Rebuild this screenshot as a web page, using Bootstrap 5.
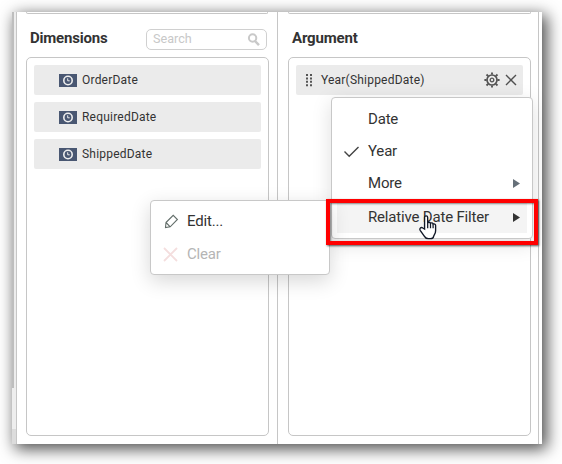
<!DOCTYPE html>
<html lang="en">
<head>
<meta charset="utf-8">
<meta name="viewport" content="width=device-width, initial-scale=1">
<title>Data bindings</title>
<link href="https://cdn.jsdelivr.net/npm/bootstrap@5.3.0/dist/css/bootstrap.min.css" rel="stylesheet">
<style>
body{width:562px;height:464px;overflow:hidden;background:#fff;font-family:Roboto,"Liberation Sans",sans-serif;color:#333;padding:12px 20px 20px 12px}
svg{display:block;flex:none}
.designer{width:530px;height:432px;background:#fff;box-shadow:4px 4px 15px 1px rgba(0,0,0,.7)}
.scroll-strip{width:4px;background:#dcdcdc}
.strip-thumb{height:376px;background:linear-gradient(90deg,#bebebe 2px,#ededed 2px)}
.strip-rest{height:41px;background:#eee}
.pane{width:261px;border-right:1px solid #c6c6c6;padding:0 7px 0 10px}
.pane-first{width:262px;border-left:1px solid #c6c6c6;padding:0 9px}
.prev-box{height:2px;border:1px solid #c6c6c6;border-top:0;border-radius:0 0 5px 5px}
.pane-head{height:43px;padding:14px 1px 0 4px}
.pane-title{font-size:15px;line-height:20px;font-weight:700;letter-spacing:-.16px}
.pane-first .pane-title{letter-spacing:-.2px}
.search-box{width:121px;height:21px;border:1px solid #d0d0d0;border-radius:5px;padding:0 5px 0 6px;font-size:12.600px;color:#c8c8c8;margin-top:1px}
.drop-box{height:379px;width:243px;border:1px solid #c6c6c6;border-radius:5px;padding:7px}
.chip{height:30px;width:227px;margin-bottom:7px;background:#ebebeb;border-radius:2px;font-size:12px;letter-spacing:.21px}
.chip-field{padding-left:25px;gap:5px}
.popup{position:absolute;background:#fff;border:1px solid #c8c8c8;border-radius:4px;font-size:15px;letter-spacing:-.18px}
.popup-main{left:331px;top:97px;width:202px;height:142px;padding:5px;box-shadow:0 5px 20px rgba(0,0,0,.13)}
.popup-sub{left:150px;top:200px;width:180px;height:75px;padding:4px 12px;box-shadow:0 6px 20px rgba(0,0,0,.16)}
.entry{height:32px;padding-left:6px;padding-right:7px}
.entry-hot{height:30px;background:#f4f4f4;margin-top:4px;padding-bottom:2px}
.entry-check{width:25px}
.sub-entry{height:33px}
.disabled-text{color:#b5b5b5}
.marker{position:absolute;left:326px;top:199px;width:212px;height:46px;border:4px solid #f00;box-shadow:1px 1px 2px rgba(0,0,0,.65),inset 1px 1px 2px rgba(0,0,0,.45)}
.pointer{position:absolute;left:418px;top:215px}
</style>
</head>
<body class="position-relative">
<svg width="0" height="0" class="position-absolute"><symbol id="clock" viewBox="0 0 18 13"><path fill="#495772" d="M0 0h18v13H0z"/><circle cx="9" cy="6.5" r="4.2" fill="none" stroke="#eee" stroke-width="1.6"/><path d="M8.7 4.3v2.5h2" fill="none" stroke="#eee"/></symbol></svg>
<main class="designer d-flex">
  <div class="scroll-strip"><div class="strip-thumb"></div><div class="strip-rest"></div></div>
  <section class="pane pane-first">
    <div class="prev-box"></div>
    <div class="pane-head d-flex justify-content-between align-items-start">
      <div class="pane-title">Dimensions</div>
      <div class="search-box d-flex align-items-center justify-content-between"><span>Search</span>
        <svg width="14" height="14" viewBox="0 0 14 14"><circle cx="5.6" cy="5" r="3.7" fill="none" stroke="#c9c9c9" stroke-width="2"/><path d="m8 8 4 4.2" stroke="#c9c9c9" stroke-width="2.5"/></svg></div>
    </div>
    <div class="drop-box">
      <div class="chip chip-field d-flex align-items-center"><svg width="18" height="13"><use href="#clock"/></svg><span>OrderDate</span></div>
      <div class="chip chip-field d-flex align-items-center"><svg width="18" height="13"><use href="#clock"/></svg><span>RequiredDate</span></div>
      <div class="chip chip-field d-flex align-items-center"><svg width="18" height="13"><use href="#clock"/></svg><span>ShippedDate</span></div>
    </div>
  </section>
  <section class="pane">
    <div class="prev-box"></div>
    <div class="pane-head"><div class="pane-title">Argument</div></div>
    <div class="drop-box">
      <div class="chip d-flex align-items-center">
        <svg width="25" height="14" viewBox="0 0 25 14" fill="#555"><path d="M10 1h2v2h-2zM14 1h2v2h-2zM10 4.4h2v2h-2zM14 4.4h2v2h-2zM10 7.8h2v2h-2zM14 7.8h2v2h-2zM10 11.2h2v2h-2zM14 11.2h2v2h-2z"/></svg>
        <span class="flex-grow-1">Year(ShippedDate)</span>
        <svg width="16" height="16" viewBox="-8 -8 16 16" fill="none" stroke="#555"><circle r="5" stroke-width="1.7"/><circle r="1.8" stroke-width="1.3"/><path stroke-width="1.9" d="M0-5.4v-2.2M0 5.4v2.2M-5.4 0h-2.2M5.4 0h2.2M3.8-3.8l1.7-1.7M3.8 3.8l1.7 1.7M-3.8-3.8l-1.7-1.7M-3.8 3.8l-1.7 1.7"/></svg>
        <svg class="ms-1" width="19" height="14" viewBox="0 0 19 14"><path d="m2 2 10 10M12 2 2 12" stroke="#505050" stroke-width="1.4"/></svg>
      </div>
    </div>
  </section>
</main>

<div class="popup popup-main">
  <div class="entry d-flex align-items-center"><span class="entry-check"></span>Date</div>
  <div class="entry d-flex align-items-center"><span class="entry-check"><svg width="16" height="14" viewBox="0 0 16 14"><path d="m1.5 7.5 4.7 4.7L15.500 3" fill="none" stroke="#444" stroke-width="1.4"/></svg></span>Year</div>
  <div class="entry d-flex align-items-center"><span class="entry-check"></span><span class="flex-grow-1">More</span><svg width="7" height="9"><path d="M0 0v9l7-4.5z" fill="#667079"/></svg></div>
  <div class="entry entry-hot d-flex align-items-center"><span class="entry-check"></span><span class="flex-grow-1">Relative Date Filter</span><svg width="7" height="9"><path d="M0 0v9l7-4.5z" fill="#333"/></svg></div>
</div>

<div class="popup popup-sub">
  <div class="sub-entry d-flex align-items-center"><svg class="me-2" width="16" height="16" viewBox="0 0 16 16"><path d="M3 8.500 10.200 1.300l4.200 4.200L7.200 12.800 2.500 13.500zM3 8.500l4.200 4.300" fill="none" stroke="#626d69" stroke-width="1.1"/></svg><span>Edit...</span></div>
  <div class="sub-entry d-flex align-items-center disabled-text"><svg class="me-2" width="16" height="16" viewBox="0 0 16 16"><path d="m1 1 13 13M14 1 1 14" stroke="#f4dede" stroke-width="1.8"/></svg><span>Clear</span></div>
</div>

<div class="marker"></div>
<svg class="pointer" width="20" height="25" viewBox="0 0 19 24"><path d="M6.2 13.5V2.4c0-2 3-2 3 0v5.2c.5-1 2.5-.8 2.7.4.8-.8 2.4-.4 2.5.8.9-.6 2.4-.2 2.4 1.2v5.2c0 3-1.600 4-1.900 5.300-.2 1.600-1.400 2.200-3 2.200H9.700c-2 0-3-.8-3.800-2.400L2 14.800c-1.200-2 .9-3.600 2.500-2.300z" fill="#fff" stroke="#111827" stroke-width="1.3"/><path d="M9.200 7.600v5M11.900 8v4.600M14.400 9v3.600" stroke="#111827" stroke-width="1.2"/></svg>
<script src="https://cdn.jsdelivr.net/npm/bootstrap@5.3.0/dist/js/bootstrap.bundle.min.js"></script>
</body>
</html>
